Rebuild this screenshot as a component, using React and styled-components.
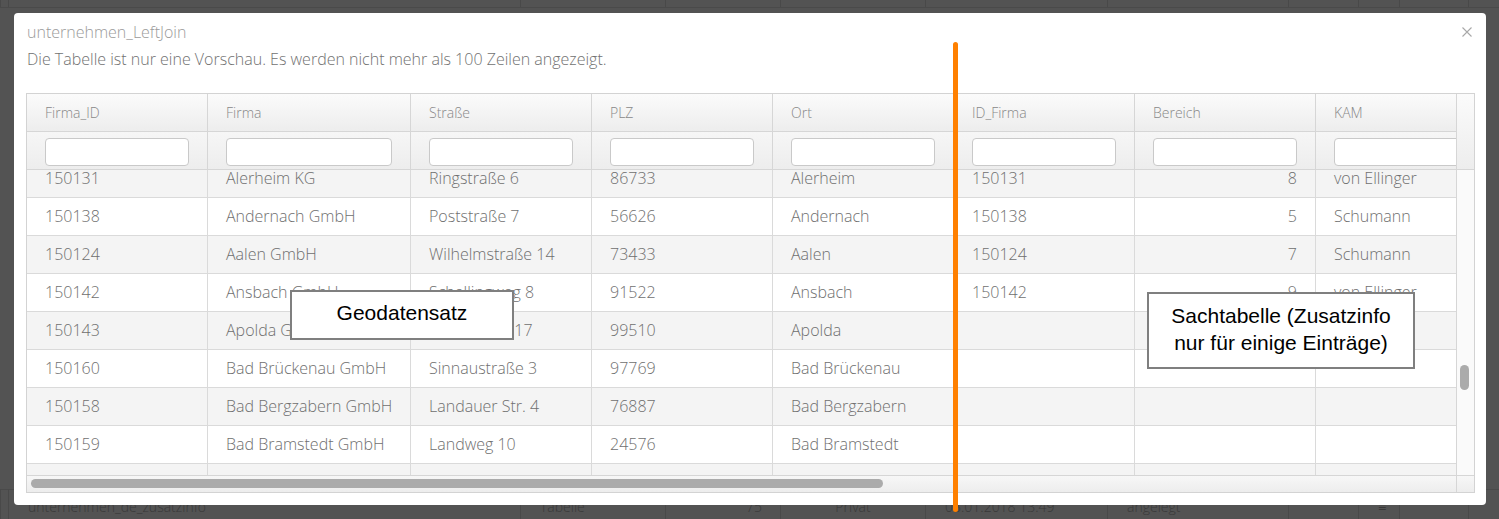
import React from 'react'
import styled, {createGlobalStyle, css} from 'styled-components'

const Global = createGlobalStyle`
  html, body {
    margin: 0;
    padding: 0;
    background: #535353;
  }
  * { box-sizing: border-box; }
`

const Page = styled.div`
  position: relative;
  width: 1499px;
  height: 519px;
  overflow: hidden;
  display: flex;
  flex-direction: column;
  justify-content: space-between;
  background: #535353;
  font-family: "Open Sans", "DejaVu Sans", sans-serif;
`

const BgRow = styled.div`
  display: grid;
  grid-template-columns: 8px 512px 145px 115px 145px 182px 181px 70px 41px 69px 1fr;
  height: ${({h}) => h}px;
  ${({top}) => top
    ? css`border-bottom: 1px solid #4a4a4a;`
    : css`border-top: 1px solid #4a4a4a;`
  };
`

const BgCell = styled.div`
  border-left: 1px solid #494949;
  padding: 0 ${({right}) => right ? '18px' : '19px'};
  line-height: 36px;
  margin-top: ${({shift}) => shift || 0}px;
  font-size: 14px;
  font-weight: 300;
  color: #393939;
  white-space: nowrap;
  overflow: hidden;
  text-align: ${({align}) => align || 'left'};
`

const Modal = styled.div`
  position: absolute;
  left: 14px;
  top: 13px;
  width: 1472px;
  height: 492px;
  background: #fff;
  border-radius: 4px;
  padding: 8px 11px 12px 12px;
  display: flex;
  flex-direction: column;
`

const TitleBar = styled.div`
  display: flex;
  justify-content: space-between;
  align-items: center;
  height: 22px;
  padding: 0 3px 0 1px;
`

const Title = styled.div`
  font-size: 16px;
  font-weight: 300;
  color: #9a9a9a;
  line-height: 22px;
`

const Close = styled.button`
  border: 0;
  background: none;
  padding: 0;
  width: 10px;
  height: 10px;
  display: flex;
  cursor: pointer;
`

const Note = styled.div`
  margin: 5px 0 23px 1px;
  font-size: 16px;
  font-weight: 300;
  line-height: 22px;
  color: #717171;
`

const Frame = styled.div`
  display: grid;
  grid-template-columns: 1fr 18px;
  grid-template-rows: 76px 1fr 17px;
  height: 400px;
  border: 1px solid #d3d3d3;
`

const Viewport = styled.div`
  overflow: hidden;
  min-width: 0;
`

const HeadRow = styled.div`
  display: flex;
  height: 38px;
  border-bottom: 1px solid #d6d6d6;
  background: linear-gradient(#fbfbfb, #ededed);
`

const HeadCell = styled.div`
  flex: 0 0 ${({w}) => w}px;
  border-right: 1px solid #d6d6d6;
  padding-left: 18px;
  line-height: 37px;
  font-size: 14px;
  font-weight: 300;
  color: #888;
  white-space: nowrap;
`

const FilterRow = styled(HeadRow)`
  background: linear-gradient(#f6f6f6, #ededed);
`

const FilterCell = styled.div`
  flex: 0 0 ${({w}) => w}px;
  border-right: 1px solid #d6d6d6;
  padding: 6px 18px 0 18px;
`

const FilterInput = styled.input`
  display: block;
  width: 100%;
  height: 28px;
  border: 1px solid #c9c9c9;
  border-radius: 4px;
  background: #fff;
  outline: none;
`

const Body = styled.div`
  overflow: hidden;
  min-width: 0;
`

const Row = styled.div`
  display: flex;
  height: 38px;
  border-bottom: 1px solid #dadada;
  background: ${({odd}) => odd ? '#f4f4f4' : '#fff'};
  &:first-child { margin-top: -10px; }
`

const Cell = styled.div`
  flex: 0 0 ${({w}) => w}px;
  border-right: 1px solid #dadada;
  padding: 0 18px;
  line-height: 37px;
  font-size: 16px;
  font-weight: 300;
  color: #6f6f6f;
  white-space: nowrap;
  overflow: hidden;
  text-align: ${({right}) => right ? 'right' : 'left'};
`

const VTrackHead = styled.div`
  border-left: 1px solid #d6d6d6;
  border-bottom: 1px solid #d6d6d6;
  background: linear-gradient(#fbfbfb, #ededed);
`

const VTrack = styled.div`
  border-left: 1px solid #d6d6d6;
  background: #fafafa;
  padding: 195px 0 0 3px;
`

const VThumb = styled.div`
  width: 9px;
  height: 25px;
  border-radius: 5px;
  background: #ababab;
`

const HTrack = styled.div`
  border-top: 1px solid #d6d6d6;
  background: linear-gradient(#f7f7f7, #ededed);
  padding: 3px 0 0 4px;
`

const HThumb = styled.div`
  width: 852px;
  height: 9px;
  border-radius: 5px;
  background: #ababab;
`

const Corner = styled.div`
  border-left: 1px solid #d6d6d6;
  border-top: 1px solid #d6d6d6;
  background: linear-gradient(#f7f7f7, #ededed);
`

const Marker = styled.div`
  position: absolute;
  left: 953px;
  top: 42px;
  width: 5px;
  height: 470px;
  border-radius: 3px;
  background: #ff8000;
`

const Label = styled.div`
  position: absolute;
  left: ${({x}) => x}px;
  top: ${({y}) => y}px;
  width: ${({w}) => w}px;
  height: ${({h}) => h}px;
  border: 2px solid #7f7f7f;
  background: #fff;
  padding-top: 8px;
  font-family: "Liberation Sans", Arial, sans-serif;
  font-size: 21px;
  line-height: ${({lh}) => lh}px;
  color: #000;
  text-align: center;
`

const cols = [
  {name: 'Firma_ID', w: 181},
  {name: 'Firma', w: 203},
  {name: 'Straße', w: 181},
  {name: 'PLZ', w: 181},
  {name: 'Ort', w: 181},
  {name: 'ID_Firma', w: 181},
  {name: 'Bereich', w: 181, right: true},
  {name: 'KAM', w: 181},
]

const rows = [
  ['150131', 'Alerheim KG', 'Ringstraße 6', '86733', 'Alerheim', '150131', '8', 'von Ellinger'],
  ['150138', 'Andernach GmbH', 'Poststraße 7', '56626', 'Andernach', '150138', '5', 'Schumann'],
  ['150124', 'Aalen GmbH', 'Wilhelmstraße 14', '73433', 'Aalen', '150124', '7', 'Schumann'],
  ['150142', 'Ansbach GmbH', 'Schellingweg 8', '91522', 'Ansbach', '150142', '9', 'von Ellinger'],
  ['150143', 'Apolda GmbH', 'Bachstraße 17', '99510', 'Apolda', '', '', ''],
  ['150160', 'Bad Brückenau GmbH', 'Sinnaustraße 3', '97769', 'Bad Brückenau', '', '', ''],
  ['150158', 'Bad Bergzabern GmbH', 'Landauer Str. 4', '76887', 'Bad Bergzabern', '', '', ''],
  ['150159', 'Bad Bramstedt GmbH', 'Landweg 10', '24576', 'Bad Bramstedt', '', '', ''],
  ['150161', 'Bad Camberg GmbH', 'Weiherstraße 2', '65520', 'Bad Camberg', '', '', ''],
]

const bgCells = [
  ['', 'left'], ['unternehmen_de_zusatzinfo', 'left'], ['Tabelle', 'left'], ['75', 'right'],
  ['Privat', 'center'], ['08.01.2018 13:49', 'left'], ['angelegt', 'left'], ['', 'left'],
  ['≡', 'center'], ['', 'left'], ['', 'left'],
]

export default function App() {
  return (
    <Page>
      <Global />
      <BgRow top h={8}>
        {bgCells.map((c, i) => <BgCell key={i} />)}
      </BgRow>
      <BgRow h={30}>
        {bgCells.map(([t, a], i) => (
          <BgCell key={i} align={a} right={a === 'right'} shift={-1}>{t}</BgCell>
        ))}
      </BgRow>

      <Modal>
        <TitleBar>
          <Title>unternehmen_LeftJoin</Title>
          <Close aria-label="Schließen">
            <svg width="10" height="10" viewBox="0 0 10 10">
              <path d="M0.5 0.5 L9.5 9.5 M9.5 0.5 L0.5 9.5" stroke="#a8a8a8" strokeWidth="1.1" fill="none" />
            </svg>
          </Close>
        </TitleBar>
        <Note>Die Tabelle ist nur eine Vorschau. Es werden nicht mehr als 100 Zeilen angezeigt.</Note>

        <Frame>
          <Viewport>
            <HeadRow>
              {cols.map(c => <HeadCell key={c.name} w={c.w}>{c.name}</HeadCell>)}
            </HeadRow>
            <FilterRow>
              {cols.map(c => (
                <FilterCell key={c.name} w={c.w}><FilterInput type="text" /></FilterCell>
              ))}
            </FilterRow>
          </Viewport>
          <VTrackHead />
          <Body>
            {rows.map((r, i) => (
              <Row key={i} odd={i % 2 === 0}>
                {cols.map((c, j) => <Cell key={c.name} w={c.w} right={c.right}>{r[j]}</Cell>)}
              </Row>
            ))}
          </Body>
          <VTrack><VThumb /></VTrack>
          <HTrack><HThumb /></HTrack>
          <Corner />
        </Frame>
      </Modal>

      <Marker />
      <Label x={290} y={290} w={224} h={50} lh={26}>Geodatensatz</Label>
      <Label x={1147} y={292} w={268} h={77} lh={27}>Sachtabelle (Zusatzinfo<br />nur für einige Einträge)</Label>
    </Page>
  )
}
